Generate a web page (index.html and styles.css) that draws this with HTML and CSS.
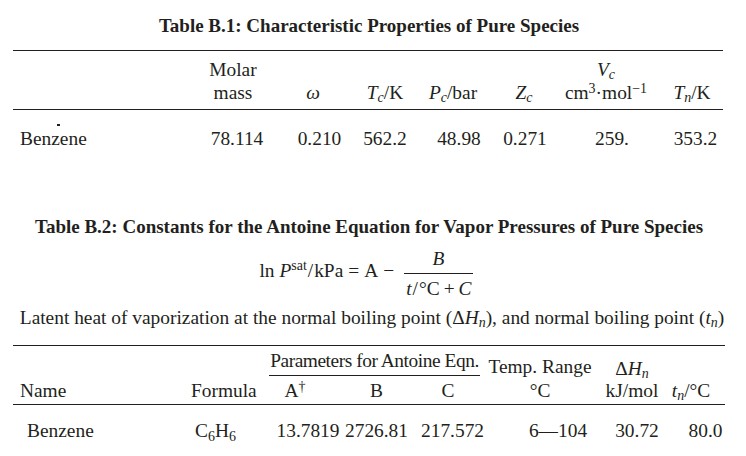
FILE: index.html
```html
<!DOCTYPE html>
<html>
<head>
<meta charset="utf-8">
<link rel="stylesheet" href="styles.css">
</head>
<body>
<div class="page">
  <div class="caption cap1">Table B.1: Characteristic Properties of Pure Species</div>
  <table class="t1">
    <colgroup>
      <col style="width:182px"><col style="width:76px"><col style="width:84px"><col style="width:60px">
      <col style="width:76px"><col style="width:66px"><col style="width:98px"><col style="width:68px">
    </colgroup>
    <thead>
      <tr class="h1">
        <th></th><th>Molar</th><th></th><th></th><th></th><th></th><th><i>V<sub>c</sub></i></th><th></th>
      </tr>
      <tr class="h2">
        <th></th><th>mass</th><th><i>ω</i></th><th><i>T<sub>c</sub></i>/K</th><th><i>P<sub>c</sub></i>/bar</th><th><i>Z<sub>c</sub></i></th><th>cm<sup>3</sup>·mol<sup>−1</sup></th><th class="tn"><i>T<sub>n</sub></i>/K</th>
      </tr>
    </thead>
    <tbody>
      <tr class="d">
        <td class="name"><span class="tick"></span>Benzene</td><td class="s8">78.114</td><td class="s13">0.210</td><td>562.2</td><td class="s12">48.98</td><td class="s2">0.271</td><td class="s12">259.</td><td class="s13">353.2</td>
      </tr>
    </tbody>
  </table>

  <div class="caption cap2">Table B.2: Constants for the Antoine Equation for Vapor Pressures of Pure Species</div>
  <div class="eq"><span class="lhs">ln <i>P</i><sup class="sat">sat</sup><span class="slash">/</span>kPa<span class="op">=</span>A<span class="op">−</span></span><span class="frac"><span class="num"><i>B</i></span><span class="den"><i>t</i><span class="slash">/</span>°C<span class="op2">+</span><i>C</i></span></span></div>
  <p class="note">Latent heat of vaporization at the normal boiling point (Δ<i>H<sub>n</sub></i>), and normal boiling point (<i>t<sub>n</sub></i>)</p>

  <table class="t2">
    <colgroup>
      <col style="width:175px"><col style="width:81px"><col style="width:74px"><col style="width:67px">
      <col style="width:70px"><col style="width:120px"><col style="width:64px"><col style="width:61px">
    </colgroup>
    <thead>
      <tr class="h1">
        <th></th><th></th><th colspan="3"><div class="params">Parameters for Antoine Eqn.</div></th><th class="range">Temp. Range</th><th class="dh">Δ<i>H<sub>n</sub></i></th><th></th>
      </tr>
      <tr class="h2">
        <th class="name">Name</th><th class="formula">Formula</th><th class="a">A<sup>†</sup></th><th>B</th><th class="s6">C</th><th>°C</th><th>kJ/mol</th><th class="tn2"><i>t<sub>n</sub></i>/°C</th>
      </tr>
    </thead>
    <tbody>
      <tr class="d">
        <td class="name2">Benzene</td><td class="formula2">C<sub class="fs">6</sub>H<sub class="fs">6</sub></td><td class="s4">13.7819</td><td>2726.81</td><td class="s11">217.572</td><td class="s36">6—104</td><td class="s10">30.72</td><td class="s22">80.0</td>
      </tr>
    </tbody>
  </table>
</div>
</body>
</html>
```

FILE: styles.css
```css
html, body {
  margin: 0;
  padding: 0;
  background: #ffffff;
}
body {
  font-family: "Liberation Serif", "Times New Roman", serif;
  color: #231f20;
  font-size: 19.4px;
}
.page {
  width: 746px;
  padding-left: 13px;
  box-sizing: border-box;
}
.caption {
  width: 712px;
  text-align: center;
  font-weight: bold;
  font-size: 19px;
  line-height: 24px;
}
.cap1 {
  padding-top: 14px;
  padding-bottom: 12px;
}
table {
  border-collapse: separate;
  border-spacing: 0;
  table-layout: fixed;
}
.t1 { width: 710px; }
.t2 { width: 712px; }
th, td {
  padding: 0;
  font-weight: normal;
  text-align: center;
  line-height: 23px;
  white-space: nowrap;
  vertical-align: top;
}
sub, sup {
  font-size: 0.72em;
  line-height: 0;
}
sub { vertical-align: -0.25em; }
sup { vertical-align: 0.45em; }

/* Table B.1 */
.t1 tr.h1 th { border-top: 1px solid #231f20; padding-top: 7px; }
.t1 tr.h2 th { border-bottom: 1px solid #231f20; padding-bottom: 5px; }
.t1 tbody td { padding-top: 17px; }
.t1 .name { text-align: left; padding-left: 7px; position: relative; }
.tick {
  position: absolute;
  left: 44px;
  top: 14px;
  width: 3px;
  height: 2px;
  background: #231f20;
}
.t1 .tn { padding-left: 6px; }
.s2 { padding-left: 2px; }
.s4 { padding-left: 4px; }
.s6 { padding-left: 6px; }
.s8 { padding-left: 8px; }
.s10 { padding-left: 10px; }
.s11 { padding-left: 11px; }
.s12 { padding-left: 12px; }
.s13 { padding-left: 13px; }
.s22 { padding-left: 22px; }
.s36 { padding-left: 36px; }

/* Table B.2 heading area */
.cap2 {
  padding-top: 65px;
}
.eq {
  width: 712px;
  text-align: center;
  margin-top: 8px;
  line-height: 24px;
  padding-right: 6px;
  box-sizing: border-box;
}
.lhs { white-space: nowrap; }
.sat {
  font-size: 0.72em;
  vertical-align: 0.5em;
  line-height: 0;
}
.slash {
  margin: 0 1px;
}
.op { margin: 0 5px; }
.op2 { margin: 0 4px; }
.frac {
  display: inline-block;
  vertical-align: -18px;
  margin-left: 5px;
  text-align: center;
}
.num {
  display: block;
  line-height: 23px;
  padding-bottom: 3px;
}
.den {
  display: block;
  border-top: 1px solid #231f20;
  line-height: 23px;
  padding: 3px 1px 0 2px;
}
.note {
  width: 712px;
  box-sizing: border-box;
  padding-left: 6px;
  text-align: center;
  margin: 6px 0 0 0;
  line-height: 23px;
}

/* Table B.2 */
.t2 { margin-top: 16px; }
.t2 tr.h1 th {
  border-top: 1px solid #231f20;
  line-height: 20px;
}
.params {
  padding-top: 4.5px;
  padding-bottom: 4.5px;
  border-bottom: 1px solid #231f20;
  letter-spacing: -0.45px;
}
.t2 tr.h1 th.range { padding-top: 10.5px; }
.t2 tr.h1 th.dh { padding-top: 12.5px; }
.t2 tr.h2 th {
  border-bottom: 1px solid #231f20;
  padding-top: 0.5px;
  padding-bottom: 2px;
}
.t2 .name { text-align: left; padding-left: 7px; }
.t2 .formula { text-align: left; padding-left: 3px; }
.t2 .a { padding-right: 22px; }
.t2 .tn2 { padding-right: 7px; }
.t2 tbody td { padding-top: 14px; }
.t2 .name2 { text-align: left; padding-left: 14px; }
.t2 .formula2 { text-align: left; padding-left: 7px; }
.fs { font-size: 0.72em; vertical-align: -0.3em; }
```
